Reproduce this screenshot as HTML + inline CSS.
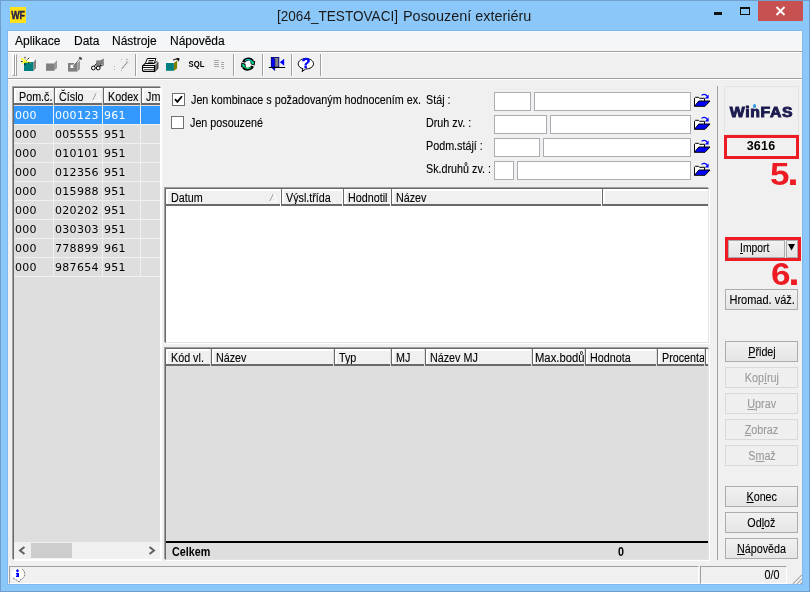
<!DOCTYPE html>
<html lang="cs">
<head>
<meta charset="utf-8">
<title>[2064_TESTOVACI] Posouzení exteriéru</title>
<style>
*{box-sizing:border-box;margin:0;padding:0}
html,body{width:810px;height:592px;overflow:hidden;background:#8cc7fa}
body{will-change:transform;font-family:"Liberation Sans",sans-serif;font-size:11px;color:#000;position:relative}
.a{position:absolute}
#frame{left:0;top:0;width:810px;height:592px;background:#8cc7fa;border:1px solid #6f9fcd}
#title{left:0;top:6px;width:810px;height:20px;font-size:15px;line-height:20px;color:#1a1a1a;white-space:nowrap}
#title span{position:absolute;top:0;transform-origin:0 50%}
#client{left:8px;top:31px;width:794px;height:553px;background:#f0f0f0;box-shadow:0 0 0 1px #80b9ee}
#menubar{left:0;top:0;width:794px;height:20px;background:#f5f6f7;font-size:12px}
#menubar span{position:absolute;top:3px;line-height:14px}
.hline{height:1px;left:0;width:794px}
.tsep{width:1px;background:#a0a0a0;top:23px;height:22px}
.tsep:after{content:"";position:absolute;left:1px;top:0;width:1px;height:22px;background:#fff}
.lbl{line-height:15px;white-space:nowrap;font-size:12.5px;transform:scaleX(.86);transform-origin:0 50%}
.inp{background:#fff;border:1px solid #abadb3;height:19px}
.btn{left:717px;width:73px;height:21px;border:1px solid #acacac;background:linear-gradient(#f1f1f1,#e5e5e5);text-align:center;line-height:21px;font-size:11px;white-space:nowrap;overflow:hidden}
.btn.dis{color:#9a9a9a;border-color:#d9d9d9;background:#efefef}
.btn span{display:inline-block;font-size:12.5px;transform:scaleX(.86);transform-origin:50% 50%}
.btn u{text-decoration:underline}
.hdr{background:#f0f0f0;border-left:1px solid #696969;border-bottom:2px solid #696969;box-shadow:inset 2px 2px 0 #fff;height:17px;line-height:16px;padding:1px 0 0 4px;white-space:nowrap;overflow:hidden;top:0}
.grid{border:1px solid;border-color:#696969 #e3e3e3 #e3e3e3 #696969;box-shadow:-1px -1px 0 #a0a0a0,1px 1px 0 #fff}
.ms{display:inline-block;font-size:12.5px;transform:scaleX(.86);transform-origin:0 50%;white-space:nowrap}
.cell{font-family:"DejaVu Sans","Liberation Sans",sans-serif;font-size:11px;line-height:19px;height:19px;white-space:nowrap;overflow:hidden;padding-left:1px;letter-spacing:.3px;border-right:1px solid #f0f0f0;border-bottom:1px solid #f0f0f0}
.lbl,.ms,.btn span,#menubar span{-webkit-text-stroke:0.12px currentColor}
.red{color:#ed1c24;font-weight:bold;font-size:30.5px;line-height:30px;white-space:nowrap;transform:scaleX(1.15);transform-origin:0 50%}
.red span{font-size:36px;letter-spacing:0;margin-left:-2px}
</style>
</head>
<body>
<div id="frame" class="a"></div>

<!-- title bar -->
<svg class="a" style="left:10px;top:7px" width="16" height="16" viewBox="0 0 16 16">
  <rect width="16" height="16" fill="#ffe11a"/>
  <text x="1.2" y="11.9" font-family="Liberation Sans, sans-serif" font-weight="bold" font-size="11" fill="#26214a" stroke="#26214a" stroke-width="0.4" textLength="13.8" lengthAdjust="spacingAndGlyphs">WF</text>
</svg>
<div id="title" class="a"><span style="left:277px;transform:scaleX(.905)">[2064_TESTOVACI] </span><span style="left:403px;transform:scaleX(.962)">Posouzení exteriéru</span></div>
<div class="a" style="left:714px;top:12px;width:8px;height:3px;background:#111"></div>
<div class="a" style="left:740px;top:7px;width:10px;height:8px;border:1px solid #111;border-top-width:2px"></div>
<div class="a" style="left:758px;top:1px;width:45px;height:20px;background:#c75050"></div>
<svg class="a" style="left:775px;top:6px" width="11" height="10" viewBox="0 0 11 10"><path d="M1.5 1 L9.5 9 M9.5 1 L1.5 9" stroke="#fff" stroke-width="1.8" fill="none"/></svg>

<div id="client" class="a">
  <div id="menubar" class="a">
    <span style="left:7px">Aplikace</span>
    <span style="left:66px">Data</span>
    <span style="left:104px">Nástroje</span>
    <span style="left:162px">Nápověda</span>
  </div>
  <div class="a hline" style="top:20px;background:#a0a0a0"></div>
  <div class="a hline" style="top:21px;background:#fff"></div>
  <div class="a hline" style="top:47px;background:#a0a0a0"></div>
  <div class="a hline" style="top:48px;background:#fff"></div>

  <!-- toolbar gripper -->
  <div class="a" style="left:4px;top:23px;width:3px;height:22px;background:#f8f8f8;border-left:1px solid #fff;border-top:1px solid #fff;border-right:1px solid #a0a0a0;border-bottom:1px solid #a0a0a0"></div>
  <div class="a" style="left:7px;top:23px;width:2px;height:22px;border-left:1px solid #fff;border-top:1px solid #fff;border-right:1px solid #a0a0a0;border-bottom:1px solid #a0a0a0"></div>
  <svg class="a" style="left:0;top:21px" width="330" height="26" viewBox="8 52 330 26" shape-rendering="auto">
    <!-- new (cube + star) -->
    <polygon points="24,62 26.5,59 36,59 33.5,62" fill="#fff"/>
    <rect x="24" y="62" width="9.5" height="9" fill="#008080"/>
    <polygon points="33.5,62 36,59 36,68 33.5,71" fill="#808080"/>
    <path d="M21.2 58 L25.6 62.4 M25 59.6 V63 M22 63.6 L24.6 61.4 M26 61.8 L30.4 62.6" stroke="#ffff00" stroke-width="1.2" fill="none"/>
    <path d="M25 56.8 V59.2 M26.4 60.6 L29.2 57.8 M24.8 63.4 V65.8 M21 61.5 H23 M28 62.6 H30.4" stroke="#000" stroke-width="0.9" fill="none" stroke-dasharray="1.6 0.7"/>
    <!-- cube disabled -->
    <rect x="46" y="63.3" width="8" height="7.5" fill="#808080"/>
    <polygon points="54,63.3 57,60 57,68 54,70.8" fill="#999"/>
    <polygon points="46,63.3 49,60.5 57,60 54,63.3" fill="#f4f4f4"/>
    <!-- cube edit disabled -->
    <rect x="68" y="63" width="9.4" height="8.6" fill="#808080"/>
    <polygon points="77.4,63 80,60.6 80,69.2 77.4,71.6" fill="#999"/>
    <rect x="70.5" y="64.8" width="3" height="3.2" fill="#fff"/>
    <path d="M73 66.5 L79.5 59" stroke="#707070" stroke-width="1.1"/>
    <path d="M72.3 66 L79 58.4" stroke="#fff" stroke-width="0.8"/>
    <ellipse cx="80.5" cy="58.3" rx="1.8" ry="1.2" transform="rotate(40 80.5 58.3)" fill="#484848"/>
    <!-- glasses disabled -->
    <polygon points="96.2,60.5 100.5,60.3 103.8,58.5 103.8,65.5 100.5,67 96.2,66.3" fill="#808080"/>
    <circle cx="93.4" cy="68" r="1.9" fill="#fff" stroke="#000" stroke-width="1"/>
    <circle cx="98.2" cy="68" r="1.9" fill="#fff" stroke="#000" stroke-width="1"/>
    <path d="M99.5 66.5 L102 64.5 M94.2 66.4 L96.4 63.6" stroke="#000" stroke-width="1"/>
    <circle cx="102" cy="64.6" r="0.9" fill="#fff" stroke="#404040" stroke-width="0.5"/>
    <!-- wand disabled -->
    <path d="M121.6 69 L127.5 62" stroke="#909090" stroke-width="1.1"/>
    <path d="M126 61.5 L128.4 62.6" stroke="#b0b0b0" stroke-width="1"/>
    <g fill="#b0b0b0"><rect x="114" y="66" width="1" height="1"/><rect x="114" y="69" width="1" height="1"/><rect x="121" y="59" width="1" height="1"/><rect x="126" y="59" width="2" height="1"/><rect x="121" y="70" width="1" height="1"/></g>
    <!-- printer -->
    <path d="M145.3 63.5 L147.4 58.5 H155.8 L154.3 63.5 Z" fill="#fff" stroke="#000" stroke-width="1"/>
    <path d="M148.6 60.5 H153.8 M148 62.2 H153.2" stroke="#000" stroke-width="0.9"/>
    <polygon points="154.5,65.5 157.9,62.2 157.9,68.6 154.5,71.5" fill="#777"/>
    <path d="M154.8 63.2 L157.4 61.2 M157.9 62 V68.6 L154.5 71.8" stroke="#000" stroke-width="0.8" fill="none"/>
    <path d="M143.5 65.5 H154.5 V71.5 H144.5 Q142.5 71.5 142.5 69.5 V66.5 Q142.5 65.5 143.5 65.5 Z" fill="#fff" stroke="#000" stroke-width="1.15"/>
    <path d="M142.6 65.8 L145.3 63.4" stroke="#000" stroke-width="1.1"/>
    <path d="M143 67.5 H154 M144 69.8 H154" stroke="#000" stroke-width="0.9"/>
    <!-- cube arrow -->
    <polygon points="166,63 169.2,60.2 177.1,60.2 173.9,63" fill="#fff"/>
    <rect x="166" y="63" width="7.9" height="7.8" fill="#008080"/>
    <polygon points="173.9,63 177.1,60.2 177.1,68.4 173.9,70.8" fill="#808000"/>
    <path d="M173.2 60.4 Q174.6 58.6 178 59.1" stroke="#000" stroke-width="1.1" fill="none"/>
    <path d="M176.2 58.2 L179.4 58 L179 61.8 Z" fill="#000"/>
    <!-- SQL -->
    <text x="188.6" y="67.3" font-family="Liberation Sans, sans-serif" font-weight="bold" font-size="8.8" fill="#000" textLength="15.8" lengthAdjust="spacingAndGlyphs">SQL</text>
    <!-- list disabled -->
    <g fill="#a8a8a8"><rect x="214" y="60" width="5" height="1"/><rect x="214" y="62" width="5" height="1"/><rect x="214" y="64" width="5" height="1"/><rect x="214" y="66" width="5" height="1"/><rect x="221" y="62" width="3" height="1"/><rect x="221" y="64" width="3" height="1"/><rect x="221" y="66" width="3" height="1"/><rect x="222" y="68" width="2" height="1"/></g>
    <!-- refresh -->
    <ellipse cx="248" cy="64" rx="4.2" ry="3.6" fill="#fff"/>
    <path d="M243.6 62.2 C244.6 59 249.6 57.8 252.6 61" stroke="#000" stroke-width="3" fill="none"/>
    <path d="M252.6 66.2 C251 69.6 246 70.2 243.4 67.4" stroke="#000" stroke-width="3" fill="none"/>
    <path d="M250.2 59.6 L255.2 61.2 L254.6 65.6 L250.8 64.2 Z" fill="#000"/>
    <path d="M246 68.6 L241 67 L241.4 62.4 L245.4 63.8 Z" fill="#000"/>
    <path d="M245 60.6 C247 59.2 250 59.4 252 61.4" stroke="#00e8e8" stroke-width="1.1" fill="none"/>
    <path d="M251.2 60.8 L254 62 L253.6 64.4 L251.4 63.4 Z" fill="#00e8a0"/>
    <path d="M251 67.4 C249 69 246.4 68.8 244.6 67.2" stroke="#00e070" stroke-width="1.1" fill="none"/>
    <path d="M245 67.6 L242.2 66.2 L242.4 63.8 L244.6 64.8 Z" fill="#00e8a0"/>
    <!-- exit door -->
    <rect x="271.4" y="57.5" width="7.4" height="9.6" fill="#808080" stroke="#000080" stroke-width="0.9"/>
    <polygon points="271.4,57.5 274.8,59 274.8,70.6 271.4,67.4" fill="#0000ff" stroke="#000080" stroke-width="0.6"/>
    <path d="M268.8 67.5 H285.2" stroke="#000" stroke-width="1"/>
    <polygon points="284.2,58.8 284.2,65.8 279.8,62.3" fill="#0000ff"/>
    <!-- help -->
    <path d="M305.8 58.6 C310.4 58.6 313.5 60.9 313.5 63.8 C313.5 66.9 310 69 305.6 69 L302 71.6 L303 68.7 C300 68 298.2 66 298.2 63.8 C298.2 60.9 301.4 58.6 305.8 58.6 Z" fill="#fff" stroke="#000" stroke-width="1"/>
    <text x="306" y="67.6" text-anchor="middle" font-family="Liberation Sans, sans-serif" font-weight="bold" font-size="14" fill="#0000ff" stroke="#0000ff" stroke-width="0.5">?</text>
  </svg>
  <div class="a tsep" style="left:127px"></div>
  <div class="a tsep" style="left:225px"></div>
  <div class="a tsep" style="left:254px"></div>
  <div class="a tsep" style="left:283px"></div>
  <div class="a tsep" style="left:312px"></div>

  <!-- left grid -->
  <div id="g1" class="a grid" style="left:5px;top:56px;width:148px;height:473px;background:#dedede;border-right-color:#fff;border-bottom-color:#fff">
    <div class="a hdr" style="left:-1px;width:40px;padding-left:5px"><span class="ms">Pom.č.</span></div>
    <div class="a hdr" style="left:40px;width:48px"><span class="ms">Číslo</span></div>
    <div class="a hdr" style="left:89px;width:37px"><span class="ms">Kodex</span></div>
    <div class="a hdr" style="left:127px;width:19px"><span class="ms">Jméno</span></div>
    <svg class="a" style="left:78px;top:4px" width="9" height="9" viewBox="0 0 9 9"><path d="M0.5 8.5 L4.5 0.5" stroke="#a0a0a0" fill="none"/><path d="M4.5 0.5 L8.5 8.5 H0.5" stroke="#fff" fill="none"/></svg>
    <div class="a cell" style="left:0px;top:18px;width:40px;background:#3399ff;color:#fff;">000</div>
    <div class="a cell" style="left:40px;top:18px;width:49px;background:#3399ff;color:#fff;">000123</div>
    <div class="a cell" style="left:89px;top:18px;width:38px;background:#3399ff;color:#fff;">961</div>
    <div class="a cell" style="left:127px;top:18px;width:19px;border-right:0;background:#3399ff;color:#fff;"></div>
    <div class="a cell" style="left:0px;top:37px;width:40px;">000</div>
    <div class="a cell" style="left:40px;top:37px;width:49px;">005555</div>
    <div class="a cell" style="left:89px;top:37px;width:38px;">951</div>
    <div class="a cell" style="left:127px;top:37px;width:19px;border-right:0;"></div>
    <div class="a cell" style="left:0px;top:56px;width:40px;">000</div>
    <div class="a cell" style="left:40px;top:56px;width:49px;">010101</div>
    <div class="a cell" style="left:89px;top:56px;width:38px;">951</div>
    <div class="a cell" style="left:127px;top:56px;width:19px;border-right:0;"></div>
    <div class="a cell" style="left:0px;top:75px;width:40px;">000</div>
    <div class="a cell" style="left:40px;top:75px;width:49px;">012356</div>
    <div class="a cell" style="left:89px;top:75px;width:38px;">951</div>
    <div class="a cell" style="left:127px;top:75px;width:19px;border-right:0;"></div>
    <div class="a cell" style="left:0px;top:94px;width:40px;">000</div>
    <div class="a cell" style="left:40px;top:94px;width:49px;">015988</div>
    <div class="a cell" style="left:89px;top:94px;width:38px;">951</div>
    <div class="a cell" style="left:127px;top:94px;width:19px;border-right:0;"></div>
    <div class="a cell" style="left:0px;top:113px;width:40px;">000</div>
    <div class="a cell" style="left:40px;top:113px;width:49px;">020202</div>
    <div class="a cell" style="left:89px;top:113px;width:38px;">951</div>
    <div class="a cell" style="left:127px;top:113px;width:19px;border-right:0;"></div>
    <div class="a cell" style="left:0px;top:132px;width:40px;">000</div>
    <div class="a cell" style="left:40px;top:132px;width:49px;">030303</div>
    <div class="a cell" style="left:89px;top:132px;width:38px;">951</div>
    <div class="a cell" style="left:127px;top:132px;width:19px;border-right:0;"></div>
    <div class="a cell" style="left:0px;top:151px;width:40px;">000</div>
    <div class="a cell" style="left:40px;top:151px;width:49px;">778899</div>
    <div class="a cell" style="left:89px;top:151px;width:38px;">961</div>
    <div class="a cell" style="left:127px;top:151px;width:19px;border-right:0;"></div>
    <div class="a cell" style="left:0px;top:170px;width:40px;">000</div>
    <div class="a cell" style="left:40px;top:170px;width:49px;">987654</div>
    <div class="a cell" style="left:89px;top:170px;width:38px;">951</div>
    <div class="a cell" style="left:127px;top:170px;width:19px;border-right:0;"></div>
    <div class="a" style="left:0;top:454px;width:146px;height:17px;background:#f0f0f0"></div>
    <div class="a" style="left:17px;top:455px;width:41px;height:15px;background:#cdcdcd"></div>
    <svg class="a" style="left:4px;top:458px" width="8" height="9" viewBox="0 0 8 9"><path d="M6.5 1 L2 4.5 L6.5 8" stroke="#606060" stroke-width="2" fill="none"/></svg>
    <svg class="a" style="left:134px;top:458px" width="8" height="9" viewBox="0 0 8 9"><path d="M1.5 1 L6 4.5 L1.5 8" stroke="#606060" stroke-width="2" fill="none"/></svg>
  </div>

  <!-- checkboxes -->
  <div class="a" style="left:164px;top:62px;width:13px;height:13px;background:#fff;border:1px solid #707070"></div>
  <svg class="a" style="left:166px;top:64px" width="9" height="9" viewBox="0 0 9 9"><path d="M1 4.2 L3.4 6.8 L8 1.2" stroke="#000" stroke-width="1.8" fill="none"/></svg>
  <div class="a lbl" style="left:183px;top:62px">Jen kombinace s požadovaným hodnocením ex.</div>
  <div class="a" style="left:163px;top:85px;width:13px;height:13px;background:#fff;border:1px solid #707070"></div>
  <div class="a lbl" style="left:182px;top:85px">Jen posouzené</div>

  <!-- filter labels -->
  <div class="a lbl" style="left:418px;top:62px">Stáj :</div>
  <div class="a lbl" style="left:418px;top:85px">Druh zv. :</div>
  <div class="a lbl" style="left:418px;top:108px">Podm.stájí :</div>
  <div class="a lbl" style="left:418px;top:131px">Sk.druhů zv. :</div>

  <div class="a inp" style="left:486px;top:61px;width:37px"></div>
  <div class="a inp" style="left:526px;top:61px;width:157px"></div>
  <div class="a inp" style="left:486px;top:84px;width:53px"></div>
  <div class="a inp" style="left:542px;top:84px;width:141px"></div>
  <div class="a inp" style="left:486px;top:107px;width:46px"></div>
  <div class="a inp" style="left:535px;top:107px;width:148px"></div>
  <div class="a inp" style="left:486px;top:130px;width:20px"></div>
  <div class="a inp" style="left:509px;top:130px;width:174px"></div>
  <svg class="a" style="left:685px;top:61px" width="18" height="16" viewBox="693 92 18 16">
    <path d="M694.5 106.3 V98.2 L695.5 97.3 H698.5 L699.5 98.3 H704.5 V101" fill="#fff" stroke="#000" stroke-width="1"/>
    <polygon points="694.5,106.3 698.8,101 710,101 705,106.3" fill="#0000ff" stroke="#000" stroke-width="1"/>
    <path d="M701.5 95.4 Q705 93 707.6 96.6" stroke="#0000ff" stroke-width="1.1" fill="none"/>
    <path d="M708.6 94.6 V98.4 H704.8 Z" fill="#0000ff"/>
  </svg>
  <svg class="a" style="left:685px;top:84px" width="18" height="16" viewBox="693 92 18 16">
    <path d="M694.5 106.3 V98.2 L695.5 97.3 H698.5 L699.5 98.3 H704.5 V101" fill="#fff" stroke="#000" stroke-width="1"/>
    <polygon points="694.5,106.3 698.8,101 710,101 705,106.3" fill="#0000ff" stroke="#000" stroke-width="1"/>
    <path d="M701.5 95.4 Q705 93 707.6 96.6" stroke="#0000ff" stroke-width="1.1" fill="none"/>
    <path d="M708.6 94.6 V98.4 H704.8 Z" fill="#0000ff"/>
  </svg>
  <svg class="a" style="left:685px;top:107px" width="18" height="16" viewBox="693 92 18 16">
    <path d="M694.5 106.3 V98.2 L695.5 97.3 H698.5 L699.5 98.3 H704.5 V101" fill="#fff" stroke="#000" stroke-width="1"/>
    <polygon points="694.5,106.3 698.8,101 710,101 705,106.3" fill="#0000ff" stroke="#000" stroke-width="1"/>
    <path d="M701.5 95.4 Q705 93 707.6 96.6" stroke="#0000ff" stroke-width="1.1" fill="none"/>
    <path d="M708.6 94.6 V98.4 H704.8 Z" fill="#0000ff"/>
  </svg>
  <svg class="a" style="left:685px;top:130px" width="18" height="16" viewBox="693 92 18 16">
    <path d="M694.5 106.3 V98.2 L695.5 97.3 H698.5 L699.5 98.3 H704.5 V101" fill="#fff" stroke="#000" stroke-width="1"/>
    <polygon points="694.5,106.3 698.8,101 710,101 705,106.3" fill="#0000ff" stroke="#000" stroke-width="1"/>
    <path d="M701.5 95.4 Q705 93 707.6 96.6" stroke="#0000ff" stroke-width="1.1" fill="none"/>
    <path d="M708.6 94.6 V98.4 H704.8 Z" fill="#0000ff"/>
  </svg>

  <!-- middle grid -->
  <div id="g2" class="a grid" style="left:157px;top:157px;width:544px;height:155px;background:#fff">
    <div class="a hdr" style="left:-1px;width:115px;padding-left:5px"><span class="ms">Datum</span></div>
    <div class="a hdr" style="left:115px;width:61px"><span class="ms">Výsl.třída</span></div>
    <div class="a hdr" style="left:177px;width:47px"><span class="ms">Hodnotil</span></div>
    <div class="a hdr" style="left:225px;width:210px"><span class="ms">Název</span></div>
    <div class="a hdr" style="left:436px;width:106px"><span class="ms"></span></div>
    <svg class="a" style="left:103px;top:4px" width="9" height="9" viewBox="0 0 9 9"><path d="M0.5 8.5 L4.5 0.5" stroke="#a0a0a0" fill="none"/><path d="M4.5 0.5 L8.5 8.5 H0.5" stroke="#fff" fill="none"/></svg>
  </div>
  <!-- lower grid -->
  <div id="g3" class="a grid" style="left:157px;top:317px;width:544px;height:212px;background:#dedede">
    <div class="a hdr" style="left:-1px;width:45px;padding-left:5px"><span class="ms">Kód vl.</span></div>
    <div class="a hdr" style="left:45px;width:122px"><span class="ms">Název</span></div>
    <div class="a hdr" style="left:168px;width:56px"><span class="ms">Typ</span></div>
    <div class="a hdr" style="left:225px;width:33px"><span class="ms">MJ</span></div>
    <div class="a hdr" style="left:259px;width:106px"><span class="ms">Název MJ</span></div>
    <div class="a hdr" style="left:366px;width:52px;padding-left:2px"><span class="ms" style="transform:scaleX(.9)">Max.bodů</span></div>
    <div class="a hdr" style="left:419px;width:71px"><span class="ms">Hodnota</span></div>
    <div class="a hdr" style="left:491px;width:47px"><span class="ms">Procenta</span></div>
    <div class="a hdr" style="left:539px;width:3px;padding:0"></div>
    <div class="a" style="left:0;top:192px;width:542px;height:2px;background:#000"></div>
    <div class="a" style="left:6px;top:196px;font-weight:bold;font-size:12.5px;line-height:15px;transform:scaleX(.86);transform-origin:0 50%">Celkem</div>
    <div class="a" style="left:445px;top:196px;width:20px;text-align:center;font-weight:bold;font-size:12.5px;line-height:15px;transform:scaleX(.86)">0</div>
  </div>

  <!-- vertical separator -->
  <div class="a" style="left:709px;top:55px;width:1px;height:474px;background:#a0a0a0"></div>

  <!-- right panel -->
  <div class="a" style="left:716px;top:55px;width:75px;height:49px;border:1px solid #e3e3e3;background:#f0f0f0"></div>
  <div class="a" style="left:716px;top:72px;width:75px;text-align:center;font-weight:bold;font-size:14.5px;line-height:18px;color:#1b1a4e;letter-spacing:0.6px;-webkit-text-stroke:0.9px #1b1a4e;transform:scaleX(1.09)">WinFAS</div>
  <div class="a" style="left:744.6px;top:73.4px;width:3.4px;height:3.4px;border-radius:50%;background:#2f9ae0"></div>
  <div class="a" style="left:716px;top:104px;width:75px;height:24px;border:3px solid #ed1c24;text-align:center;font-weight:bold;font-size:12.5px;line-height:16px;letter-spacing:.2px;padding-right:1px">3616</div>
  <div class="a red" style="left:762px;top:127px">5<span>.</span></div>

  <div class="a" style="left:717px;top:206px;width:76px;height:24px;border:3px solid #ed1c24"></div>
  <div class="a btn" style="left:720px;top:209px;width:57px;height:18px;line-height:14px;padding-right:3px"><span style="transform:scaleX(.83)"><u>I</u>mport</span></div>
  <div class="a btn" style="left:778px;top:209px;width:12px;height:18px"></div>
  <svg class="a" style="left:780px;top:213px" width="7" height="7" viewBox="0 0 7 7"><path d="M0 0 H7 L3.5 6.6 Z" fill="#000"/></svg>
  <div class="a red" style="left:763px;top:227px">6<span>.</span></div>

  <div class="a btn" style="top:258px"><span style="transform:scaleX(.88);margin-left:-1px">Hromad. váž.</span></div>
  <div class="a btn" style="top:310px"><span><u>P</u>řidej</span></div>
  <div class="a btn dis" style="top:336px"><span>Kop<u>í</u>ruj</span></div>
  <div class="a btn dis" style="top:362px"><span><u>U</u>prav</span></div>
  <div class="a btn dis" style="top:388px"><span><u>Z</u>obraz</span></div>
  <div class="a btn dis" style="top:414px"><span>S<u>m</u>až</span></div>
  <div class="a btn" style="top:455px"><span><u>K</u>onec</span></div>
  <div class="a btn" style="top:481px"><span>Od<u>l</u>ož</span></div>
  <div class="a btn" style="top:507px"><span><u>N</u>ápověda</span></div>

  <!-- status bar -->
  <div class="a" style="left:1px;top:535px;width:690px;height:18px;border-top:1px solid #a0a0a0;border-left:1px solid #a0a0a0;border-right:1px solid #fff;border-bottom:1px solid #fff"></div>
  <svg class="a" style="left:3px;top:537px" width="16" height="15" viewBox="11 568 16 15">
    <path d="M18 568.5 C21.8 568.5 24.8 571 24.8 574.4 C24.8 577 23 579 20.6 579.8 L19 581.8 L17.4 580.4 C13.6 580 11.3 577.6 11.3 574.4 C11.3 571 14.3 568.5 18 568.5 Z" fill="#fff"/>
    <path d="M22.2 569.2 C24 570.4 24.9 572.2 24.8 574.6 C24.6 577 23 578.8 20.4 579.8 L19.2 582 L17 580.3 L12.2 577.6" fill="none" stroke="#606060" stroke-width="0.8" stroke-dasharray="2.2 0.8"/>
    <path d="M17.5 569.3 V572.2 M16 570.8 H19" stroke="#0000ff" stroke-width="1.2"/>
    <path d="M16 573 H19 V577 H16 V575.6 H17 V574.4 H16 Z" fill="#0000ff"/>
  </svg>
  <div class="a" style="left:692px;top:535px;width:87px;height:18px;border-top:1px solid #a0a0a0;border-left:1px solid #a0a0a0;border-right:1px solid #fff;border-bottom:1px solid #fff;text-align:right;padding-right:7px"><span class="ms" style="transform-origin:100% 50%;line-height:17px">0/0</span></div>
  <svg class="a" style="left:782px;top:541px" width="12" height="12" viewBox="0 0 12 12"><path d="M3 12 L12 3 M7 12 L12 7 M10.5 12 L12 10.5" stroke="#a8a8a8" stroke-width="1.3"/><path d="M4.2 12 L12 4.2 M8.2 12 L12 8.2" stroke="#fff" stroke-width="0.8"/></svg>
</div>
</body>
</html>
